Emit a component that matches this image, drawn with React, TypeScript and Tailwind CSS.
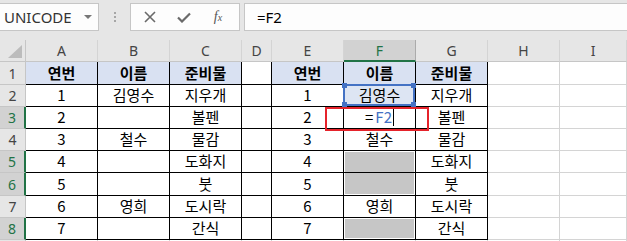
import React from "react";

const cols = ["A", "B", "C", "D", "E", "F", "G", "H", "I"];
const left = [
  ["연번", "이름", "준비물"],
  ["1", "김영수", "지우개"],
  ["2", "", "볼펜"],
  ["3", "철수", "물감"],
  ["4", "", "도화지"],
  ["5", "", "붓"],
  ["6", "영희", "도시락"],
  ["7", "", "간식"],
];
const rowH = ["h-[23px]", "h-[22px]", "h-[22px]", "h-[22px]", "h-[22px]", "h-[23px]", "h-[22px]", "h-[22px]", "h-[22px]"];
const selRows = [3, 5, 6, 8];

function Cell({ children, bold, blue, black, className = "" }: { children?: React.ReactNode; bold?: boolean; blue?: boolean; black?: boolean; className?: string }) {
  return (
    <div
      className={`relative flex items-center justify-center border-r border-b text-[15px] text-black ${black ? "border-black" : "border-[#d4d4d4]"} ${blue ? "bg-[#d9e1f2]" : "bg-white"} ${bold ? "font-bold" : ""} ${className}`}
    >
      {children}
    </div>
  );
}

export default function App() {
  const rows: React.ReactNode[] = [];
  for (let r = 1; r <= 9; r++) {
    const h = rowH[r - 1];
    const sel = selRows.includes(r);
    const cells: React.ReactNode[] = [];
    cells.push(
      <div
        key="rh"
        className={`flex items-center justify-center border-b border-r text-[14px] ${sel ? "bg-[#d2d2d2] text-[#217346] border-r-[#217346] border-r-2" : "bg-[#e6e6e6] text-[#444] border-r-[#c6c6c6]"} border-b-[#c6c6c6] ${h}`}
        style={{ fontFamily: '"Noto Sans", sans-serif' }}
      >
        {r <= 8 ? r : ""}
      </div>
    );
    const inTable = r <= 8;
    const data = inTable ? left[r - 1] : ["", "", ""];
    const hdr = r === 1;
    for (let c = 0; c < 3; c++) {
      cells.push(
        <Cell key={"L" + c} black={inTable} blue={hdr} bold={hdr} className={h}>
          {data[c]}
        </Cell>
      );
    }
    cells.push(<Cell key="D" black={inTable} className={h} />);
    cells.push(
      <Cell key="E" black={inTable} blue={hdr} bold={hdr} className={h}>
        {data[0]}
      </Cell>
    );
    let fCell: React.ReactNode;
    if (r === 2) {
      fCell = (
        <Cell key="F" black className={`${h} !bg-[#dde5f3]`}>
          {data[1]}
          <div className="absolute z-10 -left-[1px] -top-[1px] right-0 bottom-0 border-2 border-[#4472c4]">
            <span className="absolute -left-[3px] -top-[3px] w-[5px] h-[5px] bg-[#4472c4]" />
            <span className="absolute -right-[3px] -top-[3px] w-[5px] h-[5px] bg-[#4472c4]" />
            <span className="absolute -left-[3px] -bottom-[3px] w-[5px] h-[5px] bg-[#4472c4]" />
            <span className="absolute -right-[3px] -bottom-[3px] w-[5px] h-[5px] bg-[#4472c4]" />
          </div>
        </Cell>
      );
    } else if (r === 3) {
      fCell = (
        <Cell key="F" black className={h}>
          <span className="flex items-center">
            <span className="mr-[2px]">=</span>
            <span className="text-[#4472c4]">F2</span>
            <span className="ml-[1px] w-[1px] h-[17px] bg-black" />
          </span>
          <div className="absolute z-20 left-[-19px] top-0 right-[-14px] bottom-[-3px] border-2 border-[#e5232b]" />
        </Cell>
      );
    } else if (r === 5 || r === 6 || r === 8) {
      const pad = r === 5 ? "px-[1px] pt-[1px]" : r === 6 ? "px-[1px] pb-[1px]" : "p-[1px]";
      fCell = (
        <div key="F" className={`flex border-r border-b border-black bg-white ${pad} ${h}`}>
          <div className="flex-1 bg-[#c6c6c6]" />
        </div>
      );
    } else {
      fCell = (
        <Cell key="F" black={inTable} blue={hdr} bold={hdr} className={h}>
          {data[1]}
        </Cell>
      );
    }
    cells.push(fCell);
    cells.push(
      <Cell key="G" black={inTable} blue={hdr} bold={hdr} className={h}>
        {data[2]}
      </Cell>
    );
    cells.push(<Cell key="H" className={h} />);
    cells.push(<Cell key="I" className={h} />);
    rows.push(<React.Fragment key={r}>{cells}</React.Fragment>);
  }

  return (
    <div
      className="w-[627px] h-[241px] overflow-hidden bg-white"
      style={{ fontFamily: '"Noto Sans CJK KR", "Noto Sans", sans-serif' }}
    >
      <div className="h-[40px] bg-[#e6e6e6] pt-[3px] flex items-start" style={{ fontFamily: '"Noto Sans", "Open Sans", sans-serif' }}>
        <div className="w-[99px] h-[28px] bg-[#fdfdfd] border-y border-r border-[#c6c6c6] flex items-center pl-[4px] pr-[6px]">
          <span className="text-[15px] text-[#333] flex-1 leading-none">UNICODE</span>
          <svg width="8" height="5" viewBox="0 0 8 5"><path d="M0 0 L8 0 L4 4 Z" fill="#777" /></svg>
        </div>
        <div className="w-[31px] h-[28px] flex flex-col items-center justify-center gap-[2px]">
          <span className="w-[2px] h-[2px] bg-[#a6a6a6]" />
          <span className="w-[2px] h-[2px] bg-[#a6a6a6]" />
          <span className="w-[2px] h-[2px] bg-[#a6a6a6]" />
        </div>
        <div className="w-[110px] h-[28px] bg-[#fdfdfd] border border-[#c6c6c6] flex items-center">
          <div className="w-[38px] flex justify-center">
            <svg width="12" height="12" viewBox="0 0 12 12"><path d="M1 1 L11 11 M11 1 L1 11" stroke="#6a6a6a" strokeWidth="1.6" /></svg>
          </div>
          <div className="w-[30px] flex justify-center">
            <svg width="14" height="11" viewBox="0 0 14 11"><path d="M1 5.5 L5 9.5 L13 1.5" stroke="#6a6a6a" strokeWidth="2.2" fill="none" /></svg>
          </div>
          <div className="w-[38px] flex justify-center">
            <span className="text-[14px] italic text-[#555] leading-none" style={{ fontFamily: '"Liberation Serif", serif' }}>
              f<span className="text-[10px]">x</span>
            </span>
          </div>
        </div>
        <div className="ml-[4px] flex-1 h-[28px] bg-[#fdfdfd] border-y border-l border-[#c6c6c6] flex items-center pl-[12px]">
          <span className="text-[15px] text-black leading-none">=F2</span>
        </div>
      </div>
      <div className="grid grid-cols-[26px_72px_72px_72px_30px_72px_72px_72px_72px_1fr]">
        <div className="h-[22px] bg-[#e6e6e6] border-r border-b border-[#c6c6c6] relative">
          <svg className="absolute right-[3px] bottom-[3px]" width="14" height="13" viewBox="0 0 14 13"><path d="M14 0 L14 13 L0 13 Z" fill="#bcbcbc" /></svg>
        </div>
        {cols.map((c) => (
          <div
            key={c}
            className={`h-[22px] flex items-center justify-center text-[14px] border-r ${c === "F" ? "bg-[#d2d2d2] text-[#217346] border-b-2 border-b-[#217346] border-r-[#ababab]" : "bg-[#e6e6e6] text-[#444] border-b border-b-[#c6c6c6] border-r-[#d4d4d4]"}`}
            style={{ fontFamily: '"Noto Sans", sans-serif' }}
          >
            {c}
          </div>
        ))}
        {rows}
      </div>
    </div>
  );
}
